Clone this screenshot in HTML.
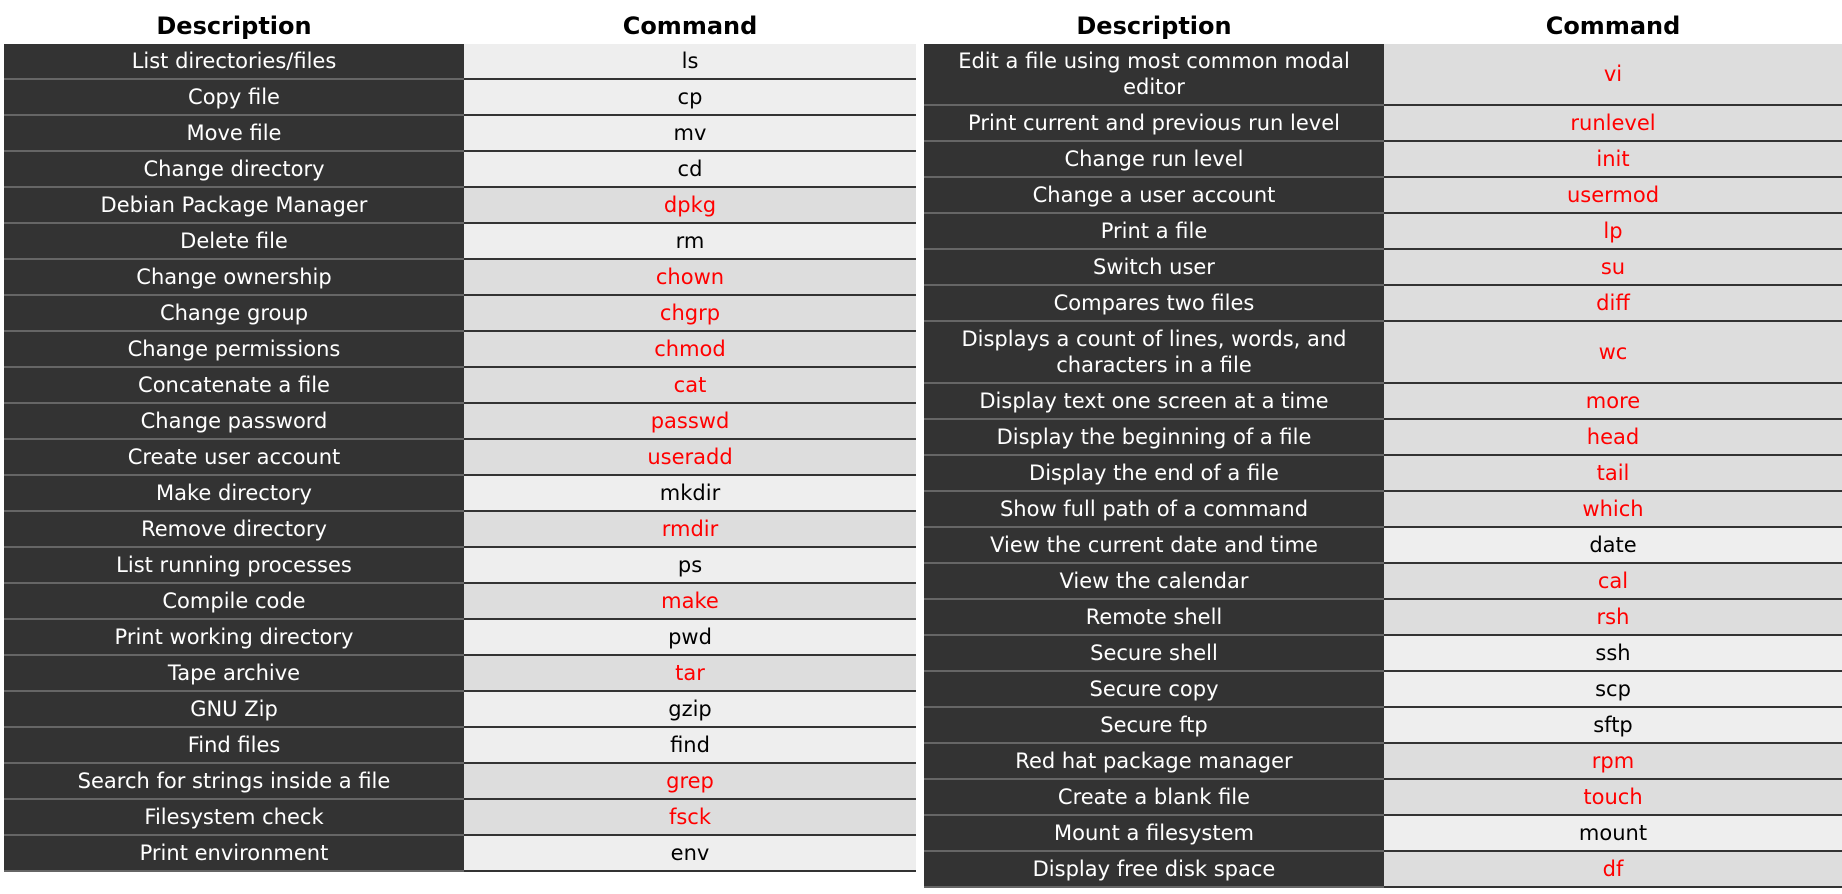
<!DOCTYPE html>
<html><head><meta charset="utf-8"><style>
*{margin:0;padding:0;box-sizing:border-box}
body{width:1842px;height:894px;background:#fff;font-family:"DejaVu Sans","Liberation Sans",sans-serif;position:relative;overflow:hidden}
.t{position:absolute;top:0}
.h{height:44px;display:flex}
.h div{font-weight:bold;font-size:24px;text-align:center;line-height:52px;height:44px}
.r{display:flex}
.d{background:#333;color:#fff;border-bottom:2px solid #666;display:flex;align-items:center;justify-content:center;text-align:center;font-size:21px;line-height:26px}
.c{display:flex;align-items:center;justify-content:center;font-size:21px;border-bottom:2px solid #333;background:#eee;color:#000}
.c.x{background:#ddd;color:#f00}
</style></head><body>
<div class="t" style="left:4px;width:912px">
<div class="h"><div style="width:460px">Description</div><div style="width:452px">Command</div></div>
<div id="L"></div>
</div>
<div class="t" style="left:924px;width:918px">
<div class="h"><div style="width:460px">Description</div><div style="width:458px">Command</div></div>
<div id="R"></div>
</div>
<script>
function build(id,rows,dw,cw){var h='';rows.forEach(function(r){var ht=r[3]?62:36;h+='<div class="r" style="height:'+ht+'px"><div class="d" style="width:'+dw+'px">'+r[0]+'</div><div class="c'+(r[2]?' x':'')+'" style="width:'+cw+'px">'+r[1]+'</div></div>';});document.getElementById(id).innerHTML=h;}
build('L',[["List directories/files","ls"],["Copy file","cp"],["Move file","mv"],["Change directory","cd"],["Debian Package Manager","dpkg",1],["Delete file","rm"],["Change ownership","chown",1],["Change group","chgrp",1],["Change permissions","chmod",1],["Concatenate a file","cat",1],["Change password","passwd",1],["Create user account","useradd",1],["Make directory","mkdir"],["Remove directory","rmdir",1],["List running processes","ps"],["Compile code","make",1],["Print working directory","pwd"],["Tape archive","tar",1],["GNU Zip","gzip"],["Find files","find"],["Search for strings inside a file","grep",1],["Filesystem check","fsck",1],["Print environment","env"]],460,452);
build('R',[["Edit a file using most common modal<br>editor","vi",1,1],["Print current and previous run level","runlevel",1],["Change run level","init",1],["Change a user account","usermod",1],["Print a file","lp",1],["Switch user","su",1],["Compares two files","diff",1],["Displays a count of lines, words, and<br>characters in a file","wc",1,1],["Display text one screen at a time","more",1],["Display the beginning of a file","head",1],["Display the end of a file","tail",1],["Show full path of a command","which",1],["View the current date and time","date"],["View the calendar","cal",1],["Remote shell","rsh",1],["Secure shell","ssh"],["Secure copy","scp"],["Secure ftp","sftp"],["Red hat package manager","rpm",1],["Create a blank file","touch",1],["Mount a filesystem","mount"],["Display free disk space","df",1]],460,458);
</script>
</body></html>
